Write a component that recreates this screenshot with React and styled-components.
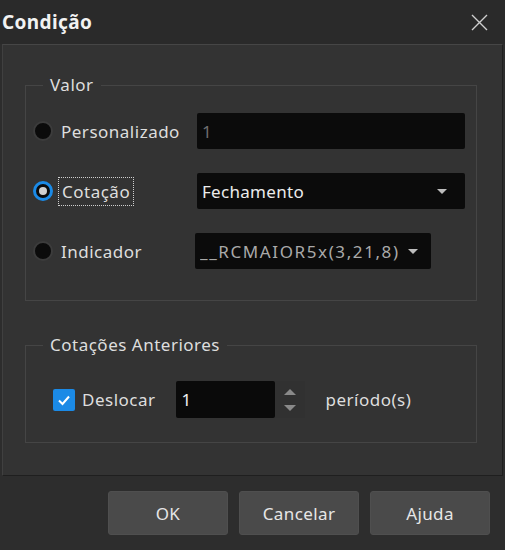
import React from 'react';
import styled, { createGlobalStyle } from 'styled-components';

const GlobalStyle = createGlobalStyle`
  html, body {
    margin: 0;
    padding: 0;
    background: #2d2d2d;
  }
  body {
    font-family: "Noto Sans", "Open Sans", sans-serif;
  }
`;

const Window = styled.div`
  width: 505px;
  height: 550px;
  background: #2d2d2d;
  color: #dedede;
  display: flex;
  flex-direction: column;
  box-sizing: border-box;
  font-size: 17px;
  letter-spacing: 0.5px;
`;

const TitleBar = styled.div`
  height: 44px;
  background: #2a2a2a;
  display: flex;
  align-items: center;
  justify-content: space-between;
  padding: 0 16px 0 2px;
  box-sizing: border-box;
`;

const Title = styled.h1`
  margin: 0;
  font-size: 19px;
  letter-spacing: 0.4px;
  font-weight: 700;
  color: #f2f2f2;
`;

const CloseButton = styled.button`
  width: 20px;
  height: 20px;
  padding: 0;
  border: none;
  background: transparent;
  display: flex;
  align-items: center;
  justify-content: center;
  cursor: pointer;
`;

const Panel = styled.div`
  margin: 0 2px;
  height: 432px;
  box-sizing: border-box;
  background: #333333;
  border-top: 1px solid #464646;
  border-left: 1px solid #404040;
  border-right: 1px solid #1f1f1f;
  border-bottom: 1px solid #1f1f1f;
  padding-top: 30px;
`;

const Group = styled.fieldset`
  margin: ${(p) => p.$top}px 0 0 22px;
  width: 452px;
  box-sizing: border-box;
  border: 1px solid #454545;
  padding: ${(p) => p.$padTop}px 0 ${(p) => p.$padBottom}px 0;
`;

const Legend = styled.legend`
  margin-left: 17px;
  padding: 0 7px;
  font-size: 17px;
  line-height: 20px;
  color: #dedede;
`;

const OptionGrid = styled.div`
  display: grid;
  grid-template-columns: 170px 1fr;
  grid-auto-rows: 36px;
  row-gap: 24px;
  align-items: center;
`;

const OptionLabel = styled.label`
  display: flex;
  align-items: center;
  gap: 8px;
  padding-left: 7px;
  color: #dedede;
  white-space: nowrap;
`;

const Radio = styled.span`
  width: 20px;
  height: 20px;
  box-sizing: border-box;
  border-radius: 50%;
  flex: none;
  background: #0b0b0b;
  border: ${(p) => (p.$checked ? '3px solid #1b8ae6' : '2px solid #3c3c3c')};
  display: flex;
  align-items: center;
  justify-content: center;

  &::after {
    content: '';
    display: ${(p) => (p.$checked ? 'block' : 'none')};
    width: 8px;
    height: 8px;
    border-radius: 50%;
    background: #d0d0d0;
  }
`;

const FocusText = styled.span`
  outline: ${(p) => (p.$focused ? '1px dotted #cfcfcf' : 'none')};
  outline-offset: 2px;
  padding: 0 1px;
`;

const Field = styled.div`
  height: 36px;
  width: ${(p) => p.$width}px;
  margin-left: ${(p) => p.$shift}px;
  box-sizing: border-box;
  background: #0b0b0b;
  border-radius: 2px;
  display: flex;
  align-items: center;
  padding: 0 0 0 5px;
  color: ${(p) => p.$color};
  overflow: hidden;
  white-space: nowrap;
`;

const FieldText = styled.span`
  flex: 1;
  overflow: hidden;
  letter-spacing: ${(p) => p.$spacing ?? 0.3}px;
`;

const Caret = styled.span`
  flex: none;
  width: 0;
  height: 0;
  margin: 0 ${(p) => p.$right}px 0 6px;
  border-left: 5px solid transparent;
  border-right: 5px solid transparent;
  border-top: 5px solid #bdbdbd;
`;

const ShiftRow = styled.div`
  display: flex;
  align-items: center;
  padding-left: 27px;
`;

const CheckLabel = styled.label`
  display: flex;
  align-items: center;
  gap: 7px;
  color: #dedede;
`;

const CheckBox = styled.span`
  width: 22px;
  height: 22px;
  border-radius: 2px;
  background: #1b8ae6;
  display: flex;
  align-items: center;
  justify-content: center;
`;

const Spin = styled.div`
  display: flex;
  align-items: center;
  margin-left: 20px;
`;

const SpinInput = styled.div`
  width: 99px;
  height: 37px;
  box-sizing: border-box;
  background: #0a0a0a;
  border-radius: 2px;
  display: flex;
  align-items: center;
  padding-left: 6px;
  color: #f0f0f0;
`;

const SpinArrows = styled.div`
  width: 30px;
  height: 37px;
  background: #313131;
  display: flex;
  flex-direction: column;
  align-items: center;
  justify-content: center;
  gap: 10px;
`;

const Arrow = styled.span`
  width: 0;
  height: 0;
  border-left: 6px solid transparent;
  border-right: 6px solid transparent;
  ${(p) => (p.$up ? 'border-bottom: 6px solid #8a8a8a;' : 'border-top: 6px solid #8a8a8a;')}
`;

const Unit = styled.span`
  margin-left: 21px;
  color: #dedede;
`;

const Footer = styled.div`
  display: flex;
  justify-content: flex-end;
  gap: 11px;
  padding: 15px 15px 0 0;
`;

const Button = styled.button`
  width: 120px;
  height: 44px;
  border: 1px solid #4f4f4f;
  border-radius: 3px;
  background: #4a4a4a;
  color: #e6e6e6;
  font-family: inherit;
  font-size: 17px;
  letter-spacing: 0.4px;
  cursor: pointer;
`;

export default function App() {
  return (
    <>
      <GlobalStyle />
      <Window>
        <TitleBar>
          <Title>Condição</Title>
          <CloseButton aria-label="Fechar">
            <svg width="17" height="17" viewBox="0 0 17 17">
              <path d="M1 1 L16 16 M16 1 L1 16" stroke="#cfcfcf" strokeWidth="1.4" />
            </svg>
          </CloseButton>
        </TitleBar>

        <Panel>
          <Group $top={0} $padTop={18} $padBottom={31}>
            <Legend>Valor</Legend>
            <OptionGrid>
              <OptionLabel>
                <Radio />
                Personalizado
              </OptionLabel>
              <Field $width={268} $shift={1} $color="#6f6f6f">
                <FieldText>1</FieldText>
              </Field>

              <OptionLabel>
                <Radio $checked />
                <FocusText $focused>Cotação</FocusText>
              </OptionLabel>
              <Field $width={268} $shift={1} $color="#ececec">
                <FieldText>Fechamento</FieldText>
                <Caret $right={18} />
              </Field>

              <OptionLabel>
                <Radio />
                Indicador
              </OptionLabel>
              <Field $width={236} $shift={-1} $color="#a9a9a9">
                <FieldText $spacing={1.6}>__RCMAIOR5x(3,21,8)</FieldText>
                <Caret $right={13} />
              </Field>
            </OptionGrid>
          </Group>

          <Group $top={34} $padTop={26} $padBottom={24}>
            <Legend>Cotações Anteriores</Legend>
            <ShiftRow>
              <CheckLabel>
                <CheckBox>
                  <svg width="14" height="14" viewBox="0 0 14 14">
                    <path d="M2 7.5 L5.5 11 L12 3.5" fill="none" stroke="#fff" strokeWidth="2" />
                  </svg>
                </CheckBox>
                Deslocar
              </CheckLabel>
              <Spin>
                <SpinInput>1</SpinInput>
                <SpinArrows>
                  <Arrow $up />
                  <Arrow />
                </SpinArrows>
              </Spin>
              <Unit>período(s)</Unit>
            </ShiftRow>
          </Group>
        </Panel>

        <Footer>
          <Button>OK</Button>
          <Button>Cancelar</Button>
          <Button>Ajuda</Button>
        </Footer>
      </Window>
    </>
  );
}
